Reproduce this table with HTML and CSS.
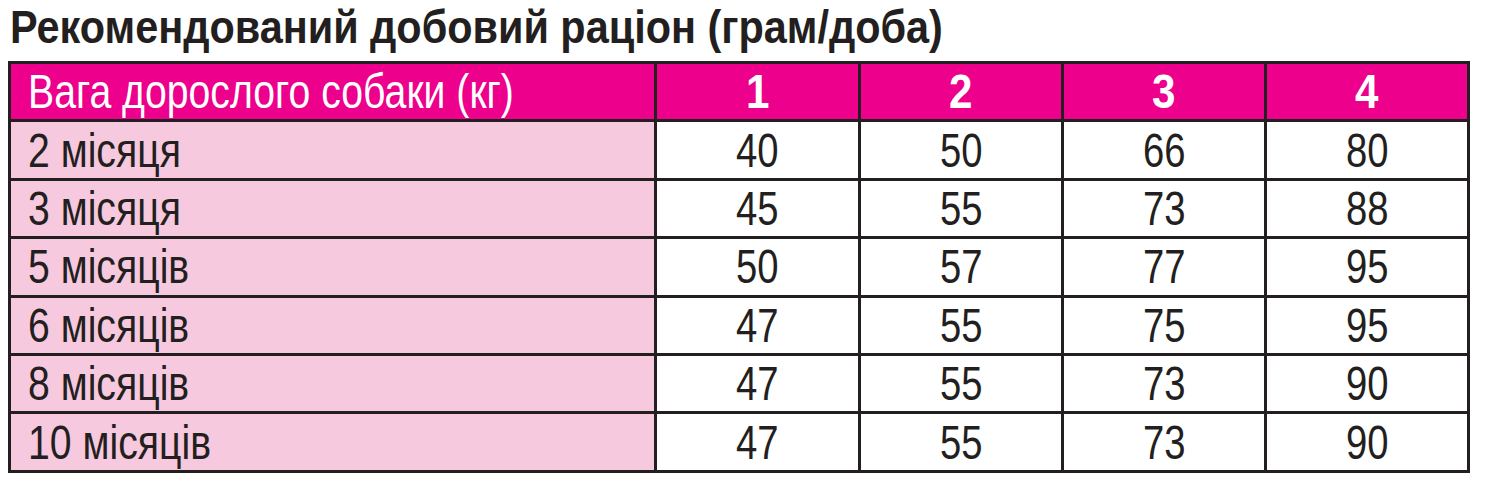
FILE: index.html
```html
<!DOCTYPE html>
<html lang="uk">
<head>
<meta charset="utf-8">
<title>Рекомендований добовий раціон</title>
<link rel="stylesheet" href="styles.css">
</head>
<body>
<h1 class="title"><span class="squeeze-title">Рекомендований добовий раціон (грам/доба)</span></h1>
<div class="table">
  <div class="cell head label"><span class="sq">Вага дорослого собаки (кг)</span></div>
  <div class="cell head num"><span class="sqb">1</span></div>
  <div class="cell head num"><span class="sqb">2</span></div>
  <div class="cell head num"><span class="sqb">3</span></div>
  <div class="cell head num"><span class="sqb">4</span></div>

  <div class="cell label"><span class="sq">2 місяця</span></div>
  <div class="cell num"><span class="sqn">40</span></div><div class="cell num"><span class="sqn">50</span></div><div class="cell num"><span class="sqn">66</span></div><div class="cell num"><span class="sqn">80</span></div>

  <div class="cell label"><span class="sq">3 місяця</span></div>
  <div class="cell num"><span class="sqn">45</span></div><div class="cell num"><span class="sqn">55</span></div><div class="cell num"><span class="sqn">73</span></div><div class="cell num"><span class="sqn">88</span></div>

  <div class="cell label"><span class="sq">5 місяців</span></div>
  <div class="cell num"><span class="sqn">50</span></div><div class="cell num"><span class="sqn">57</span></div><div class="cell num"><span class="sqn">77</span></div><div class="cell num"><span class="sqn">95</span></div>

  <div class="cell label"><span class="sq">6 місяців</span></div>
  <div class="cell num"><span class="sqn">47</span></div><div class="cell num"><span class="sqn">55</span></div><div class="cell num"><span class="sqn">75</span></div><div class="cell num"><span class="sqn">95</span></div>

  <div class="cell label"><span class="sq">8 місяців</span></div>
  <div class="cell num"><span class="sqn">47</span></div><div class="cell num"><span class="sqn">55</span></div><div class="cell num"><span class="sqn">73</span></div><div class="cell num"><span class="sqn">90</span></div>

  <div class="cell label"><span class="sq">10 місяців</span></div>
  <div class="cell num"><span class="sqn">47</span></div><div class="cell num"><span class="sqn">55</span></div><div class="cell num"><span class="sqn">73</span></div><div class="cell num"><span class="sqn">90</span></div>
</div>
</body>
</html>
```
FILE: styles.css
```css
html, body {
  margin: 0;
  padding: 0;
  background: #ffffff;
}
body {
  padding: 0 0 0 8px;
  font-family: "Liberation Sans", Arial, sans-serif;
  color: #231f20;
}
.title {
  margin: 0;
  box-sizing: border-box;
  height: 61px;
  padding: 1px 0 0 2px;
  font-size: 46px;
  font-weight: bold;
  line-height: 52px;
  white-space: nowrap;
  color: #231f20;
}
.squeeze-title {
  display: inline-block;
  transform: scaleX(0.9);
  transform-origin: left center;
}
.table {
  display: grid;
  width: 1462px;
  box-sizing: border-box;
  grid-template-columns: 643px 201px 200px 200px 200px;
  grid-auto-rows: 55.4px;
  gap: 3px;
  padding: 3px;
  background: #231f20;
}
.cell {
  display: flex;
  align-items: center;
  font-size: 49px;
  line-height: 1;
  white-space: nowrap;
  background: #ffffff;
}
.cell.label {
  background: #f7c9de;
  padding-left: 17px;
}
.cell.num {
  justify-content: center;
}
.cell.head {
  background: #ec008c;
  color: #ffffff;
}
.sq {
  display: inline-block;
  transform: scaleX(0.8);
  transform-origin: left center;
}
.sqn {
  display: inline-block;
  transform: scaleX(0.78);
  transform-origin: center center;
}
.sqb {
  display: inline-block;
  font-weight: bold;
  transform: scaleX(0.86);
  transform-origin: center center;
}
```
